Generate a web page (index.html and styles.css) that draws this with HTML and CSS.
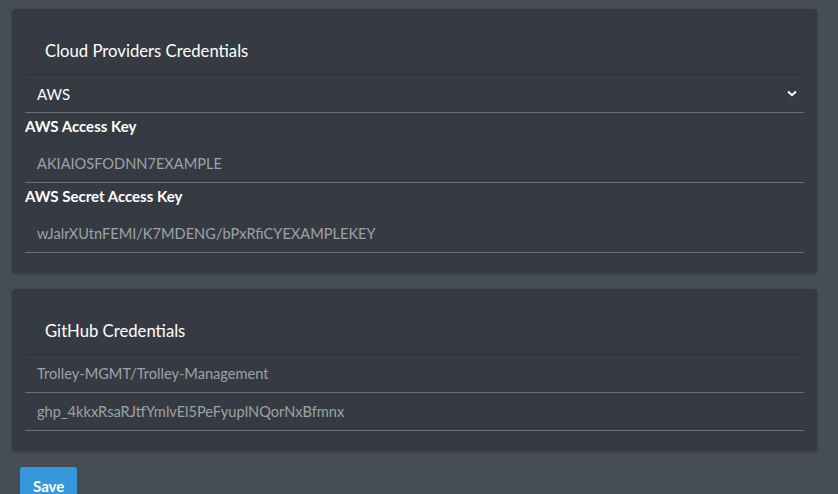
FILE: index.html
```html
<!DOCTYPE html>
<html>
<head>
<meta charset="utf-8">
<link rel="stylesheet" href="styles.css">
</head>
<body>
<div class="page">
  <section class="card">
    <div class="card-header">Cloud Providers Credentials</div>
    <div class="select">
      <span>AWS</span>
      <svg class="chevron" width="10" height="7" viewBox="0 0 10 7"><path d="M1 1.5 L5 5.2 L9 1.5" fill="none" stroke="#fff" stroke-width="2"/></svg>
    </div>
    <div class="label">AWS Access Key</div>
    <div class="input">AKIAIOSFODNN7EXAMPLE</div>
    <div class="label">AWS Secret Access Key</div>
    <div class="input">wJalrXUtnFEMI/K7MDENG/bPxRfiCYEXAMPLEKEY</div>
  </section>
  <section class="card">
    <div class="card-header">GitHub Credentials</div>
    <div class="input">Trolley-MGMT/Trolley-Management</div>
    <div class="input">ghp_4kkxRsaRJtfYmlvEl5PeFyuplNQorNxBfmnx</div>
  </section>
  <div class="actions"><button class="btn">Save</button></div>
</div>
</body>
</html>
```
FILE: styles.css
```css
html, body {
  margin: 0;
  padding: 0;
  height: 100%;
  overflow: hidden;
}
body {
  background: #464d55;
  font-family: Lato, "Noto Sans", sans-serif;
  color: #fff;
}
.page {
  padding: 9px 21px 0 12px;
  display: flex;
  flex-direction: column;
  gap: 16px;
}
.card {
  background: #363a42;
  border-radius: 4px;
  box-shadow: 0 1px 3px rgba(0,0,0,0.25);
  padding: 0 13px 20px;
  display: flex;
  flex-direction: column;
}
.card-header {
  font-size: 16.7px;
  line-height: 24px;
  padding: 30px 20px 11px;
  border-bottom: 1px solid #2c3037;
}
.select {
  height: 37px;
  border-bottom: 1px solid #6b7077;
  display: flex;
  align-items: center;
  justify-content: space-between;
  padding: 0 7px 0 12px;
  font-size: 15px;
  color: #fff;
}
.chevron { display: block; }
.label {
  font-weight: bold;
  font-size: 15px;
  line-height: 20px;
  padding-top: 3px;
  margin-bottom: 9px;
}
.input {
  height: 37px;
  border-bottom: 1px solid #6b7077;
  display: flex;
  align-items: center;
  padding-left: 12px;
  font-size: 14.6px;
  color: #9ea2a8;
}
.actions {
  display: flex;
}
.btn {
  margin-left: 8px;
  background: #3498db;
  color: #fff;
  border: none;
  border-radius: 3px;
  font-family: Lato, "Noto Sans", sans-serif;
  font-weight: bold;
  font-size: 15px;
  padding: 0 13px;
  height: 38px;
  line-height: 38px;
}
```
